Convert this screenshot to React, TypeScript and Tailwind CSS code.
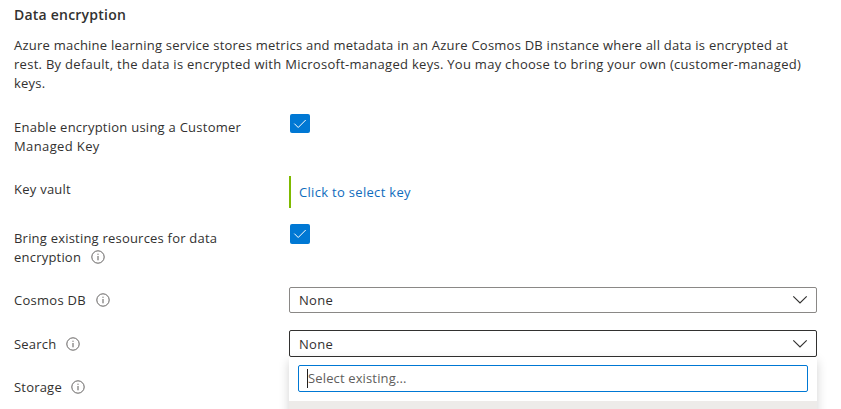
import type { ReactNode } from "react";

function InfoIcon() {
  return (
    <svg width="14" height="14" viewBox="0 0 14 14" fill="none" className="mb-px shrink-0">
      <circle cx="7" cy="7" r="6.2" stroke="#5c5a58" strokeWidth="0.95" />
      <path d="M7 6v4.3M7 3.7v1.1" stroke="#5c5a58" strokeWidth="1" />
    </svg>
  );
}

function Checkbox({ className }: { className: string }) {
  return (
    <span className={`ml-px flex w-5 items-center justify-center rounded-[2px] bg-[#0078d4] ${className}`}>
      <svg width="14" height="12" viewBox="0 0 14 12" fill="none">
        <path d="M1.3 5.6L5.2 9.5L12.7 2" stroke="#ffffff" strokeWidth="1" />
      </svg>
    </span>
  );
}

function Chevron() {
  return (
    <svg width="16" height="10" viewBox="0 0 16 10" fill="none">
      <path d="M1.3 1.3L8 8L14.7 1.3" stroke="#323130" strokeWidth="1.15" />
    </svg>
  );
}

function Row({ className, children }: { className: string; children: ReactNode }) {
  return <div className={`flex items-start ${className}`}>{children}</div>;
}

export default function App() {
  return (
    <main className="h-[409px] w-[841px] overflow-hidden bg-white pl-[14px] pt-[5px] font-['Open_Sans','Noto_Sans',sans-serif] text-[13px] leading-[19px] text-[#323130]">
      <h1 className="w-fit text-[14px] font-semibold leading-[19px] tracking-[0.22px]">Data encryption</h1>

      <p className="mt-3 h-[57px] whitespace-nowrap">
        <span className="block w-fit tracking-[0.235px]">Azure machine learning service stores metrics and metadata in an Azure Cosmos DB instance where all data is encrypted at</span>
        <span className="block w-fit tracking-[0.283px]">rest. By default, the data is encrypted with Microsoft-managed keys. You may choose to bring your own (customer-managed)</span>
        <span className="block w-fit tracking-[0.2px]">keys.</span>
      </p>

      <Row className="mt-[21px] h-[62px]">
        <div className="w-[275px] pt-1 tracking-[0.25px]">
          <span className="block w-fit">Enable encryption using a Customer</span>
          <span className="block w-fit tracking-[0.38px]">Managed Key</span>
        </div>
        <Checkbox className="h-[19px]" />
      </Row>

      <Row className="h-12">
        <div className="w-[275px] pt-1 tracking-[0.25px]">Key vault</div>
        <div className="flex h-8 items-center border-l-2 border-[#7fba00] pl-2 tracking-[0.31px] text-[#0f6cbd]">
          <a>Click to select key</a>
        </div>
      </Row>

      <Row className="h-[63px]">
        <div className="w-[275px] pt-[5px] tracking-[0.21px]">
          <span className="block w-fit">Bring existing resources for data</span>
          <span className="flex items-center gap-[9.5px]">encryption <InfoIcon /></span>
        </div>
        <Checkbox className="h-5" />
      </Row>

      <Row className="h-[43px]">
        <div className="flex w-[275px] items-center gap-2.5 pt-1 tracking-[0.28px]">Cosmos DB <InfoIcon /></div>
        <div className="flex h-[26px] w-[528px] items-center justify-between rounded-[2px] border border-[#8a8886] pl-[9px] pr-2 tracking-[0.31px]">
          None <Chevron />
        </div>
      </Row>

      <div className="flex items-start">
        <div className="w-[275px] tracking-[0.2px]">
          <div className="flex items-center gap-[9.5px] pt-[5px]">Search <InfoIcon /></div>
          <div className="mt-6 flex items-center gap-[9.5px]">Storage <InfoIcon /></div>
        </div>
        <div className="w-[528px]">
          <div className="flex h-[27px] items-center justify-between rounded-[2px] border border-[#323130] pl-[9px] pr-2 tracking-[0.31px]">
            <span className="pt-px">None</span> <Chevron />
          </div>
          <div className="h-[110px] shadow-[0_4px_10px_rgba(0,0,0,0.18)]">
            <div className="h-11 bg-white px-[9px] pt-2">
              <div className="flex h-[27px] items-center rounded-[2px] border border-[#0078d4] pl-2 tracking-[0.14px] text-[#605e5c]">
                <span className="h-[19px] w-px bg-[#201f1e]" />
                Select existing...
              </div>
            </div>
            <div className="h-16 bg-[#edebe9]" />
          </div>
        </div>
      </div>
    </main>
  );
}
